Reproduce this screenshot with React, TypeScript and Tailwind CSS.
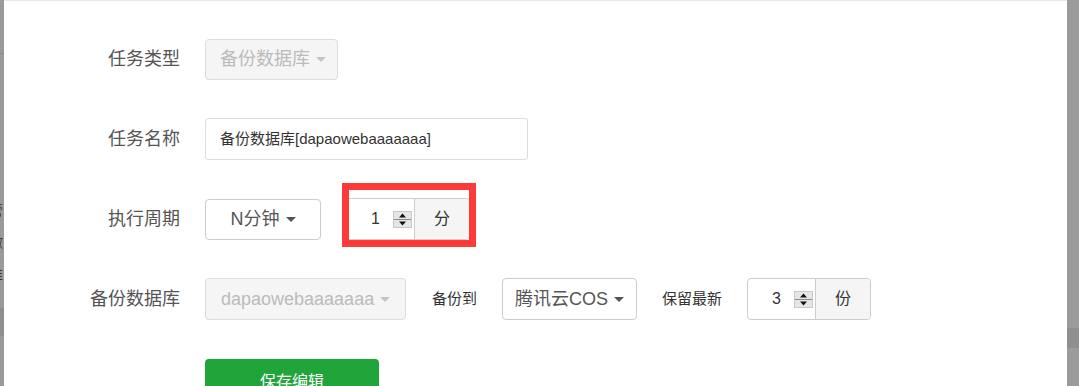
import React from "react";

const Caret = ({ light = false }: { light?: boolean }) => (
  <span
    className={
      light
        ? "ml-[6px] inline-block h-0 w-0 border-x-[5px] border-t-[5px] border-x-transparent border-t-[#c4c4c4]"
        : "ml-[6px] inline-block h-0 w-0 border-x-[5px] border-t-[5px] border-x-transparent border-t-[#555]"
    }
  />
);

const Spinner = () => (
  <svg width="19" height="17" viewBox="0 0 19 17" className="shrink-0">
    <rect x="0.5" y="0.5" width="18" height="16" fill="#e6e6e6" stroke="#c8c8c8" />
    <line x1="1" y1="8.5" x2="18" y2="8.5" stroke="#8a8a8a" />
    <path d="M9.5 2.5 L13 6.5 L6 6.5 Z" fill="#111" />
    <path d="M6 10.5 L13 10.5 L9.5 14.5 Z" fill="#111" />
  </svg>
);

const NumberGroup = ({ value, unit }: { value: string; unit: string }) => (
  <div className="flex h-[42px] overflow-hidden rounded-[4px] border border-[#ccc] bg-white">
    <div className="flex w-[67px] items-center pl-[24px] pr-[2px] text-[16px] text-[#333]">
      <span>{value}</span>
      <span className="ml-auto flex items-center">
        <Spinner />
      </span>
    </div>
    <div className="flex w-[55px] items-center justify-center border-l border-[#ccc] bg-[#f5f5f5] text-[16px] text-[#333]">
      {unit}
    </div>
  </div>
);

const Label = ({ children }: { children: React.ReactNode }) => (
  <div className="w-[176px] shrink-0 text-right text-[18px] text-[#555]">{children}</div>
);

export default function App() {
  return (
    <div className="flex h-[386px] w-[1079px] overflow-hidden bg-white font-['Liberation_Sans','Noto_Sans_CJK_SC',sans-serif]">
      {/* left dimmed page strip */}
      <div className="flex w-[4px] shrink-0 flex-col overflow-hidden bg-[#9a9a9a]">
        <div className="h-[53px] shrink-0" />
        <div className="h-[1px] shrink-0 bg-[#8a8a8a]" />
        <div className="flex shrink-0 flex-col pt-[140px] text-[14px] leading-[32px] text-[#3a3a3a]">
          <span className="-ml-[11px] whitespace-nowrap">管</span>
          <span className="-ml-[11px] whitespace-nowrap">做</span>
          <span className="-ml-[11px] whitespace-nowrap">维</span>
        </div>
        <div className="mt-[18px] h-[28px] shrink-0 bg-[#8e8e8e]" />
      </div>

      {/* modal body */}
      <div className="flex flex-1 flex-col gap-[38px] border-t border-[#e8e8e8] pt-[38px]">
        {/* 任务类型 */}
        <div className="flex h-[42px] items-center">
          <Label>任务类型</Label>
          <div className="ml-[25px] flex h-[41px] w-[133px] items-center rounded-[4px] border border-[#ddd] bg-[#f5f5f5] pl-[14px] text-[18px] text-[#bbb]">
            <span>备份数据库</span>
            <Caret light />
          </div>
        </div>

        {/* 任务名称 */}
        <div className="flex h-[42px] items-center">
          <Label>任务名称</Label>
          <div className="ml-[25px] flex h-[42px] w-[323px] items-center rounded-[3px] border border-[#ddd] bg-white pl-[14px] text-[15px] text-[#333]">
            备份数据库[dapaowebaaaaaaa]
          </div>
        </div>

        {/* 执行周期 */}
        <div className="flex h-[42px] items-center">
          <Label>执行周期</Label>
          <div className="ml-[25px] flex h-[41px] w-[116px] items-center justify-center rounded-[4px] border border-[#ccc] bg-white text-[18px] text-[#555]">
            <span>N分钟</span>
            <Caret />
          </div>
          <div className="relative ml-[25px]">
            <NumberGroup value="1" unit="分" />
            <div className="pointer-events-none absolute -left-[4px] -top-[15px] h-[64px] w-[134px] border-[7px] border-[#fc3a3a]" />
          </div>
        </div>

        {/* 备份数据库 */}
        <div className="flex h-[42px] items-center">
          <Label>备份数据库</Label>
          <div className="ml-[25px] flex h-[42px] w-[201px] items-center rounded-[4px] border border-[#ddd] bg-[#f5f5f5] pl-[15px] text-[18px] text-[#bbb]">
            <span>dapaowebaaaaaaa</span>
            <Caret light />
          </div>
          <div className="ml-[26px] text-[15px] text-[#333]">备份到</div>
          <div className="ml-[25px] flex h-[42px] w-[135px] items-center justify-center rounded-[4px] border border-[#ccc] bg-white text-[18px] text-[#555]">
            <span>腾讯云COS</span>
            <Caret />
          </div>
          <div className="ml-[25px] text-[15px] text-[#333]">保留最新</div>
          <div className="ml-[25px]">
            <NumberGroup value="3" unit="份" />
          </div>
        </div>

        {/* save button */}
        <div className="flex pl-[201px]">
          <div className="mt-[1px] flex h-[46px] w-[174px] items-center justify-center rounded-[4px] bg-[#20a53a] text-[16px] text-white">
            保存编辑
          </div>
        </div>
      </div>

      {/* right dimmed strip */}
      <div className="flex w-[12px] shrink-0 flex-col bg-[#9b9b9b]">
        <div className="h-[328px] shrink-0" />
        <div className="h-[20px] shrink-0 bg-[#8f8f8f]" />
      </div>
    </div>
  );
}
